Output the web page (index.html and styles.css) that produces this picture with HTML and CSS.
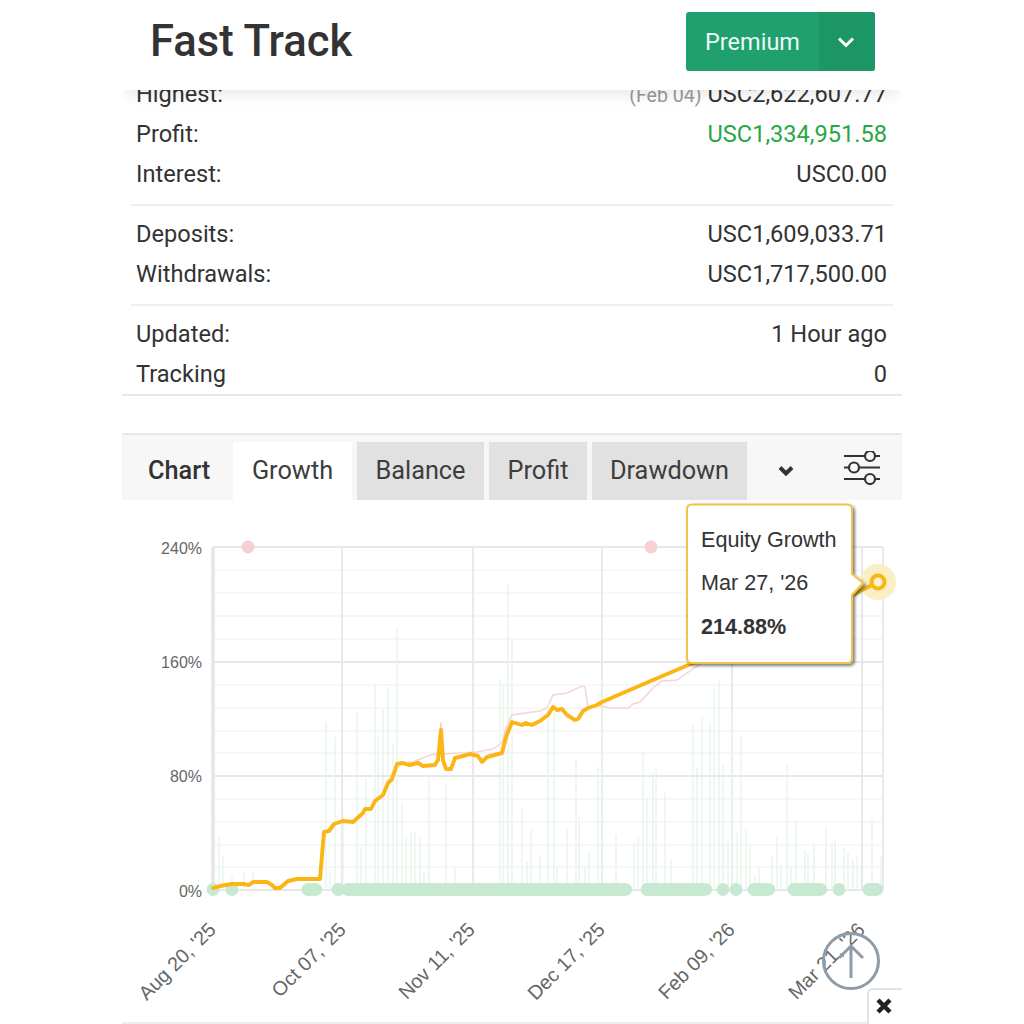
FILE: index.html
```html
<!DOCTYPE html>
<html lang="en">
<head>
<meta charset="utf-8">
<title>Fast Track</title>
<link rel="stylesheet" href="styles.css">
</head>
<body>
<main class="page">
  <header class="topbar">
    <h1 class="title">Fast Track</h1>
    <div class="premium">
      <span class="premium-label">Premium</span>
      <span class="premium-caret">
        <svg class="caret-icon" viewBox="0 0 18 12"><path d="M2 2.5 9 9.5 16 2.5"/></svg>
      </span>
    </div>
  </header>

  <section class="stats">
    <div class="group">
      <div class="row"><span>Highest:</span><span><small class="muted">(Feb 04)</small> USC2,622,607.77</span></div>
      <div class="row"><span>Profit:</span><span class="green">USC1,334,951.58</span></div>
      <div class="row"><span>Interest:</span><span>USC0.00</span></div>
    </div>
    <div class="group">
      <div class="row"><span>Deposits:</span><span>USC1,609,033.71</span></div>
      <div class="row"><span>Withdrawals:</span><span>USC1,717,500.00</span></div>
    </div>
    <div class="group last">
      <div class="row"><span>Updated:</span><span>1 Hour ago</span></div>
      <div class="row"><span>Tracking</span><span>0</span></div>
    </div>
  </section>

  <section class="chart-card">
    <nav class="tabs">
      <strong class="tabs-title">Chart</strong>
      <span class="tab active">Growth</span>
      <span class="tab balance">Balance</span>
      <span class="tab profit">Profit</span>
      <span class="tab drawdown">Drawdown</span>
      <svg class="more" viewBox="0 0 16 12"><path d="M2 2.5 8 8.5 14 2.5"/></svg>
      <svg class="sliders" viewBox="0 0 36 34">
        <path d="M0 5H21M31 5H36M0 16.500H5M15 16.500H36M0 28H21M31 28H36"/>
        <circle cx="26" cy="5" r="5"/><circle cx="10" cy="16.500" r="5"/><circle cx="26" cy="28" r="5"/>
      </svg>
    </nav>
    <svg class="plot" viewBox="122 500 780 524" width="780" height="524">
      <defs>
        <filter id="tipshadow" x="-10%" y="-10%" width="125%" height="125%">
          <feDropShadow dx="2" dy="2" stdDeviation="1.6" flood-color="#000" flood-opacity=".5"/>
        </filter>
      </defs>
      <path class="grid-minor" d="M213 570H883M213 593H883M213 616H883M213 639H883M213 685H883M213 708H883M213 731H883M213 753H883M213 799H883M213 822H883M213 845H883M213 867H883"/>
      <path class="grid-major" d="M213 547H883M213 662H883M213 776H883M213 890H883M342 547V890M473 547V890M602 547V890M732 547V890M862 547V890M883 547V890"/>
      <path class="grid-axis" d="M213 547V890"/>
      <path class="bars" d="M219 890V837M223 890V855M232 890V877M244 890V873M253 890V873M326 890V722M330 890V870M335 890V737M343 890V813M357 890V712M361 890V847M366 890V780M375 890V685M378 890V737M383 890V710M388 890V687M393 890V743M397 890V628M402 890V803M406 890V837M411 890V832M415 890V832M420 890V837M424 890V872M429 890V773M446 890V783M455 890V867M500 890V680M503 890V685M508 890V585M512 890V640M522 890V808M527 890V862M531 890V830M540 890V855M548 890V710M554 890V713M557 890V867M567 890V828M576 890V760M579 890V817M585 890V867M589 890V852M598 890V767M602 890V680M616 890V835M634 890V843M638 890V838M643 890V752M647 890V798M653 890V773M656 890V767M665 890V792M671 890V860M693 890V725M697 890V768M702 890V718M710 890V723M714 890V688M719 890V680M723 890V765M728 890V838M732 890V713M737 890V833M741 890V736M746 890V830M750 890V845M755 890V875M759 890V867M772 890V857M777 890V837M781 890V865M787 890V765M791 890V867M796 890V822M805 890V850M808 890V853M814 890V843M826 890V827M832 890V843M835 890V840M844 890V848M848 890V852M853 890V860M857 890V857M872 890V820M881 890V857"/>
      <path class="dots-base" d="M308 889.500H316M338 889.500H339M348 889.500H626M647 889.500H706M754 889.500H769M794 889.500H821M869 889.500H877"/>
      <path class="dots" d="M213 889.500H214M232 889.500H233M308 889.500H316M338 889.500H339M348 889.500H626M647 889.500H706M723 889.500H723.500M736 889.500H736.500M754 889.500H769M794 889.500H821M839 889.500H840M869 889.500H877"/>
      <circle class="pink-dot" cx="248" cy="547" r="6.500"/>
      <circle class="pink-dot" cx="651" cy="547" r="6.500"/>
      <path class="pink-line" d="M403 763 413 762 430 755 438 754 441 722 443 754 477 752 493 749 502 743 506 728 512 715 540 711 547 708 553 695 567 693 582 686 585 687 588 708 597 705 610 708 628 708 633 704 640 702 653 688 662 681 677 680 700 664"/>
      <path class="equity" d="M213 888 220 886 232 884 243 884 249 885 253 882 267 882 272 885 275 888 280 888 288 881 297 879 320 879 324 832 329 831 334 824 343 821 353 822 363 813 365 809 371 809 375 801 383 795 388 783 392 779 397 764 403 763 410 765 418 763 423 766 435 765 438 760 441 730 443 760 446 769 451 769 455 758 463 756 470 754 478 756 482 762 487 757 502 753 506 737 512 722 522 725 526 723 532 725 540 721 548 715 553 707 557 710 562 709 567 715 575 720 578 719 583 711 588 708 597 705 602 702 653 680 700 660"/>
      <circle class="halo" cx="878" cy="582" r="18"/>
      <path class="pointer-line" d="M852 595 878 582"/>
      <circle class="point" cx="878" cy="582" r="6.500"/>
      <path class="tip" filter="url(#tipshadow)" d="M692 504.500H847Q852 504.500 852 509.500V574L863 583 852 595V658Q852 663 847 663H692Q687 663 687 658V509.500Q687 504.500 692 504.500Z"/>
      <text class="tip-text" x="701" y="547">Equity Growth</text>
      <text class="tip-text" x="701" y="590">Mar 27, '26</text>
      <text class="tip-text tip-bold" x="701" y="634">214.88%</text>
      <g class="y-labels">
        <text x="202" y="554">240%</text>
        <text x="202" y="668">160%</text>
        <text x="202" y="782">80%</text>
        <text x="202" y="897">0%</text>
      </g>
      <g class="x-labels">
        <text transform="translate(217 931) rotate(-45)">Aug 20, '25</text>
        <text transform="translate(347 931) rotate(-45)">Oct 07, '25</text>
        <text transform="translate(476 931) rotate(-45)">Nov 11, '25</text>
        <text transform="translate(606 931) rotate(-45)">Dec 17, '25</text>
        <text transform="translate(736 931) rotate(-45)">Feb 09, '26</text>
        <text transform="translate(866 931) rotate(-45)">Mar 21, '26</text>
      </g>
    </svg>
    <div class="footer-line"></div>
  </section>

  <svg class="to-top" viewBox="0 0 60 60">
    <circle cx="30" cy="30" r="27.500"/>
    <path d="M30 47V15M18 27 30 15 42 27"/>
  </svg>
  <div class="close">
    <svg viewBox="0 0 16 16"><path d="M2 2 14 14M14 2 2 14"/></svg>
  </div>
</main>
</body>
</html>
```

FILE: styles.css
```css
* { box-sizing: border-box; }
html, body { margin: 0; height: 1024px; overflow: hidden; background: #fff; }
body { font-family: Roboto, "Liberation Sans", sans-serif; color: #333; }
.page { position: relative; width: 780px; height: 1024px; margin: 0 auto; padding-top: 74px; overflow: hidden; }

.topbar { position: absolute; z-index: 5; top: 0; left: 0; right: 0; height: 90px; background: #fff; box-shadow: 0 8px 14px -4px rgba(0,0,0,.1); }
.title { position: absolute; left: 28px; top: 16px; margin: 0; font-size: 43.600px; line-height: 52px; font-weight: 500; color: #333; }
.premium { position: absolute; left: 564px; top: 12px; width: 189px; height: 59px; display: flex; border-radius: 3px; overflow: hidden; background: #21a06f; color: #eafaf3; }
.premium-label { width: 133px; display: flex; align-items: center; justify-content: center; font-size: 23.500px; }
.premium-caret { flex: 1; display: flex; align-items: center; justify-content: center; padding-right: 2px; background: #1d9666; }
.caret-icon { width: 18px; height: 12px; fill: none; stroke: #fff; stroke-width: 3; }

.stats { font-size: 23.600px; }
.group { margin: 0 9px; padding-bottom: 10px; margin-bottom: 8px; border-bottom: 2px solid #efefef; }
.group.last { margin: 0; padding: 0 15px 0 14px; height: 82px; border-bottom: 2px solid #e8e8e8; }
.row { height: 40px; padding: 0 6px 0 5px; display: flex; align-items: center; justify-content: space-between; }
.group.last .row { padding: 0; }
.muted { font-size: 19.600px; color: #999; }
.green { color: #28a745; }

.chart-card { margin-top: 37px; }
.tabs { height: 67px; padding-top: 7px; display: flex; align-items: stretch; background: #f7f7f7; border-top: 2px solid #e8e8e8; font-size: 25.300px; line-height: 56px; }
.tabs-title { width: 111px; padding-left: 26px; display: flex; align-items: center; font-weight: 500; }
.tab { display: flex; align-items: center; justify-content: center; margin-right: 5px; background: #e1e1e1; color: #3d3d3d; }
.tab.active { width: 119px; background: #fff; }
.tab.balance { width: 127px; }
.tab.profit { width: 98px; }
.tab.drawdown { width: 155px; }
.more { width: 16px; height: 12px; margin: 23px 0 0 26px; fill: none; stroke: #333; stroke-width: 4; }
.sliders { width: 36px; height: 34px; margin: 9px 0 0 50px; fill: none; stroke: #333; stroke-width: 2.200; }

.plot { display: block; font-family: "Liberation Sans", Arial, sans-serif; }
.grid-minor { fill: none; stroke: #f5f5f5; stroke-width: 1.500; }
.grid-major { fill: none; stroke: #e7e7e7; stroke-width: 1.800; }
.grid-axis { fill: none; stroke: #e6e6e6; stroke-width: 3.500; }
.bars { fill: none; stroke: #e9f4ec; stroke-width: 1.400; }
.dots-base { fill: none; stroke: #c7e9d2; stroke-width: 12.400; stroke-linecap: round; }
.dots { fill: none; stroke: #c7e9d2; stroke-width: 13; stroke-linecap: round; stroke-dasharray: 0 6; }
.pink-dot { fill: #f8d0d0; }
.pink-line { fill: none; stroke: #f6d4d4; stroke-width: 1.500; }
.equity { fill: none; stroke: #fbb615; stroke-width: 3.900; stroke-linejoin: round; stroke-linecap: round; }
.halo { fill: #faeec4; }
.pointer-line { fill: none; stroke: #f5b81e; stroke-width: 4; }
.point { fill: #fff3cf; stroke: #fbb615; stroke-width: 4; }
.tip { fill: #fff; stroke: #f3c24e; stroke-width: 2; }
.tip-text { font-size: 21.600px; fill: #333; }
.tip-bold { font-weight: 700; }
.y-labels { font-size: 16px; fill: #666; text-anchor: end; }
.x-labels { font-size: 19.800px; fill: #666; text-anchor: end; }
.footer-line { height: 2px; margin-top: -2px; position: relative; background: #ececec; }

.to-top { position: absolute; z-index: 3; left: 699px; top: 931px; width: 60px; height: 60px; fill: none; stroke: #8f9ca7; stroke-width: 3; }
.close { position: absolute; z-index: 4; left: 745px; top: 988px; width: 35px; height: 36px; padding: 0 4px 2px 0; display: flex; align-items: center; justify-content: center; background: #fff; border-top: 2px solid #e2e2e2; border-left: 2px solid #e2e2e2; border-top-left-radius: 6px; }
.close svg { width: 16px; height: 16px; fill: none; stroke: #222; stroke-width: 4.500; }
```
